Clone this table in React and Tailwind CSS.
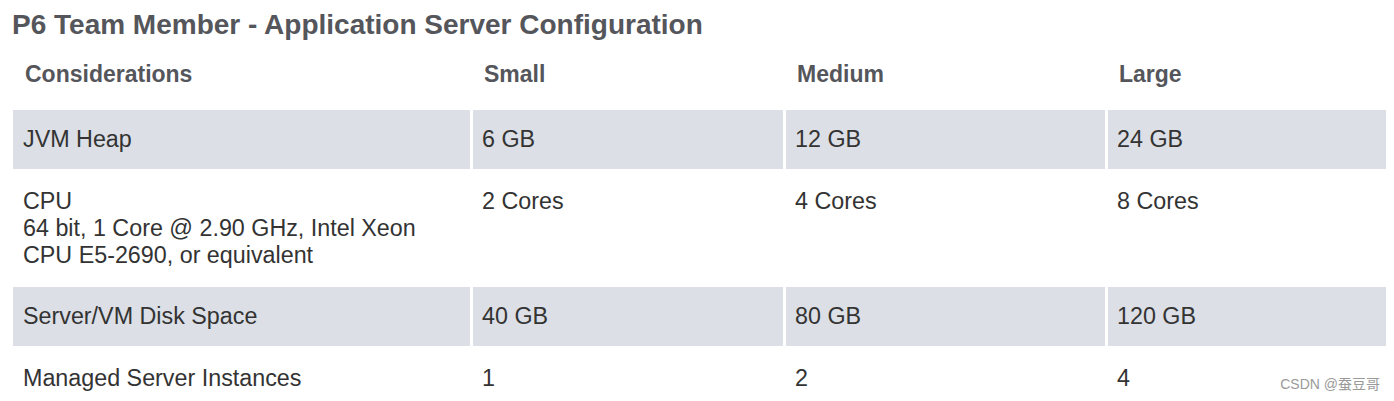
export default function App() {
  const font = { fontFamily: '"Liberation Sans", Arial, "Noto Sans CJK SC", sans-serif' };
  const rows = [
    { gray: true, h: "h-[59px]", pt: "pt-[16px]", cells: [["JVM Heap"], ["6 GB"], ["12 GB"], ["24 GB"]] },
    {
      gray: false,
      h: "h-[118px]",
      pt: "pt-[19px]",
      cells: [["CPU", "64 bit, 1 Core @ 2.90 GHz, Intel Xeon", "CPU E5-2690, or equivalent"], ["2 Cores"], ["4 Cores"], ["8 Cores"]],
    },
    { gray: true, h: "h-[59px]", pt: "pt-[16px]", cells: [["Server/VM Disk Space"], ["40 GB"], ["80 GB"], ["120 GB"]] },
    { gray: false, h: "h-[55px]", pt: "pt-[19px]", cells: [["Managed Server Instances"], ["1"], ["2"], ["4"]] },
  ];
  const cols = "grid grid-cols-[457px_310px_319px_278px] gap-x-[3px]";
  return (
    <div className="w-[1394px] h-[401px] bg-white overflow-hidden relative" style={font}>
      <div className="pl-[12px] pt-[9px] text-[28px] leading-[32px] font-bold text-[#55565b]">
        P6 Team Member - Application Server Configuration
      </div>
      <div className="ml-[13px] w-[1373px]">
        <div className={`${cols} h-[69px]`}>
          {["Considerations", "Small", "Medium", "Large"].map((t, i) => (
            <div key={t} className={`pt-[20px] ${i === 0 ? "pl-[12px]" : "pl-[11px]"} text-[23px] leading-[26px] font-bold text-[#55565b]`}>
              {t}
            </div>
          ))}
        </div>
        {rows.map((r, ri) => (
          <div key={ri} className={`${cols} ${r.h}`}>
            {r.cells.map((lines, ci) => (
              <div
                key={ci}
                className={`${r.gray ? "bg-[#dcdfe6]" : "bg-white"} ${r.pt} ${ci === 0 ? "pl-[10px]" : "pl-[9px]"} text-[23.3px] leading-[27px] text-[#333333] relative`}
              >
                {lines.map((l, li) => (
                  <div key={li}>{l}</div>
                ))}
                {ri === 3 && ci === 3 && (
                  <div className="absolute right-[6px] top-[30px] text-[14px] leading-[16px] text-[#9a9a9a]">CSDN @蚕豆哥</div>
                )}
              </div>
            ))}
          </div>
        ))}
      </div>
    </div>
  );
}
